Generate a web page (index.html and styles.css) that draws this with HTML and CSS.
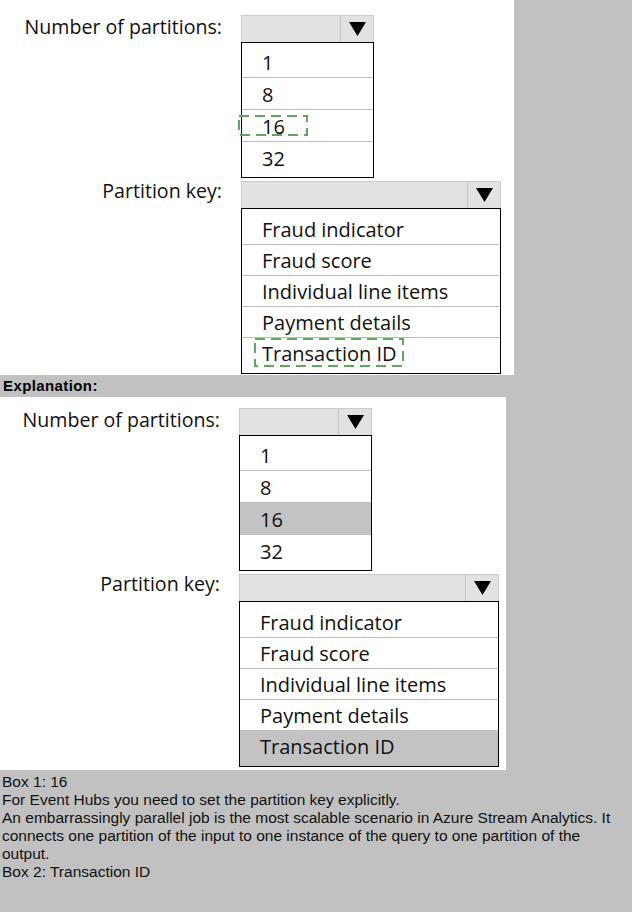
FILE: index.html
```html
<!DOCTYPE html>
<html lang="en">
<head>
<meta charset="utf-8">
<title>Partitions</title>
<link rel="stylesheet" href="styles.css">
</head>
<body>
<div class="panel panel-q">
  <div class="form">
    <div class="label label-first">Number of partitions:</div>
    <div class="select select-narrow">
      <span class="select-value"></span>
      <span class="select-btn"><svg class="tri" width="17" height="14" viewBox="0 0 17 14"><polygon points="0,0 17,0 8.5,14"/></svg></span>
    </div>
    <ul class="options options-narrow">
      <li class="opt">1</li>
      <li class="opt">8</li>
      <li class="opt"><span class="mark">16<svg class="dash dash-16" width="70" height="21" viewBox="0 0 70 21"><rect x="1" y="1" width="68" height="19" stroke-dasharray="10 6"/></svg></span></li>
      <li class="opt">32</li>
    </ul>
    <div class="label label-second">Partition key:</div>
    <div class="select select-wide">
      <span class="select-value"></span>
      <span class="select-btn"><svg class="tri" width="17" height="14" viewBox="0 0 17 14"><polygon points="0,0 17,0 8.5,14"/></svg></span>
    </div>
    <ul class="options options-wide">
      <li class="opt">Fraud indicator</li>
      <li class="opt">Fraud score</li>
      <li class="opt">Individual line items</li>
      <li class="opt">Payment details</li>
      <li class="opt"><span class="mark">Transaction ID<svg class="dash dash-tid" width="150" height="29" viewBox="0 0 150 29"><rect x="1" y="1" width="148" height="27" stroke-dasharray="10 6"/></svg></span></li>
    </ul>
  </div>
</div>
<div class="expl-title">Explanation:</div>
<div class="panel panel-a">
  <div class="form form-a">
    <div class="label label-first">Number of partitions:</div>
    <div class="select select-narrow">
      <span class="select-value"></span>
      <span class="select-btn"><svg class="tri" width="17" height="14" viewBox="0 0 17 14"><polygon points="0,0 17,0 8.5,14"/></svg></span>
    </div>
    <ul class="options options-narrow">
      <li class="opt">1</li>
      <li class="opt">8</li>
      <li class="opt opt-selected">16</li>
      <li class="opt">32</li>
    </ul>
    <div class="label label-second">Partition key:</div>
    <div class="select select-wide">
      <span class="select-value"></span>
      <span class="select-btn"><svg class="tri" width="17" height="14" viewBox="0 0 17 14"><polygon points="0,0 17,0 8.5,14"/></svg></span>
    </div>
    <ul class="options options-wide">
      <li class="opt">Fraud indicator</li>
      <li class="opt">Fraud score</li>
      <li class="opt">Individual line items</li>
      <li class="opt">Payment details</li>
      <li class="opt opt-selected">Transaction ID</li>
    </ul>
  </div>
</div>
<div class="notes">
  Box 1: 16<br>
  For Event Hubs you need to set the partition key explicitly.<br>
  An embarrassingly parallel job is the most scalable scenario in Azure Stream Analytics. It<br>
  connects one partition of the input to one instance of the query to one partition of the<br>
  output.<br>
  Box 2: Transaction ID
</div>
</body>
</html>
```
FILE: styles.css
```css
html, body {
  margin: 0;
  padding: 0;
}
body {
  background: #c1c1c1;
  width: 632px;
  min-height: 912px;
  font-family: "Open Sans", "Noto Sans", sans-serif;
  color: #111;
}
.panel {
  background: #fff;
  box-sizing: border-box;
}
.panel-q {
  width: 514px;
  padding: 15px 0 1px;
}
.panel-a {
  width: 506px;
  padding: 11px 0 3px;
}
.form {
  display: grid;
  grid-template-columns: 222px auto;
  column-gap: 19px;
  justify-items: start;
}
.form-a {
  grid-template-columns: 220px auto;
}
.label {
  grid-column: 1;
  justify-self: end;
  font-size: 19.6px;
  line-height: 27px;
  color: #111;
  white-space: nowrap;
}
.label-first {
  margin-top: -2px;
}
.label-second {
  margin-top: -1px;
  align-self: start;
}
.select {
  grid-column: 2;
  display: flex;
  height: 27px;
  box-sizing: border-box;
  border: 1px solid #cbcbcb;
  border-bottom: none;
  background: #e2e2e2;
}
.select-narrow { width: 133px; }
.select-wide { width: 260px; margin-top: 3px; }
.select-value { flex: 1; }
.select-btn {
  width: 32px;
  border-left: 1px solid #c4c4c4;
  display: flex;
  align-items: center;
  justify-content: center;
}
.tri { display: block; fill: #000; }
.options {
  grid-column: 2;
  list-style: none;
  margin: 0;
  box-sizing: border-box;
  border: 1px solid #000;
  background: #fff;
}
.options-narrow { width: 133px; padding: 3px 0 4px; }
.options-wide { width: 260px; padding: 5px 0 0; }
.opt {
  height: 31px;
  line-height: 33px;
  padding-left: 20px;
  font-size: 20px;
  color: #111;
  white-space: nowrap;
}
.options-wide .opt {
  height: 30px;
  line-height: 32px;
}
.options-wide .opt:last-child {
  height: 35px;
}
.opt + .opt {
  border-top: 1px solid #bdbdbd;
}
.opt-selected {
  background: #c3c3c3;
}
.mark {
  position: relative;
  display: inline-block;
}
.dash {
  position: absolute;
  fill: none;
  stroke: #5aaa5a;
  stroke-width: 2;
}
.dash-16 { left: -24px; top: 5px; }
.dash-tid { left: -8px; top: 0; }
.expl-title {
  height: 22px;
  line-height: 22px;
  padding-left: 3px;
  font-family: "Liberation Sans", Arial, sans-serif;
  font-weight: bold;
  font-size: 15px;
  letter-spacing: 0.4px;
  color: #000;
}
.notes {
  padding: 3px 0 0 2px;
  font-family: "Liberation Sans", Arial, sans-serif;
  font-size: 15.5px;
  line-height: 18px;
  color: #111;
}
```
